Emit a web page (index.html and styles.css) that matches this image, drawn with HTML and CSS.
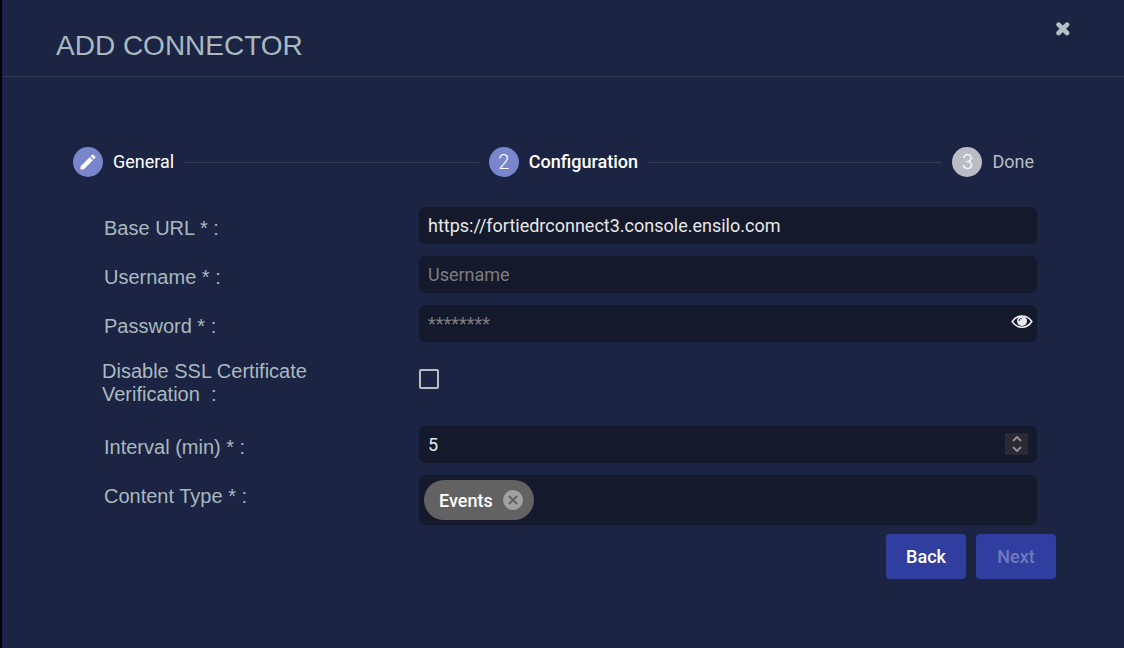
FILE: index.html
```html
<!DOCTYPE html>
<html lang="en">
  <head>
    <meta charset="utf-8">
    <title>Add Connector</title>
    <link rel="stylesheet" href="styles.css">
  </head>

  <body>
    <main class="dialog">
      <header class="dialog-header">
        <h1>ADD CONNECTOR</h1>
        <button type="button" class="close" aria-label="Close">
          <svg width="14" height="14" viewBox="0 0 14 14"><path d="M2.600 2.600 L11 11 M11 2.600 L2.600 11" stroke="currentColor" stroke-width="4.600" stroke-linecap="round"/></svg>
        </button>
      </header>

      <ol class="stepper">
        <li class="step visited">
          <span class="circle">
            <svg width="20" height="20" viewBox="0 0 24 24"><path fill="currentColor" d="M3 17.25V21h3.75L17.81 9.94l-3.75-3.75L3 17.25zM20.71 7.04a1 1 0 0 0 0-1.41l-2.34-2.34a1 1 0 0 0-1.41 0l-1.83 1.83 3.75 3.75 1.83-1.83z"/></svg>
          </span>
          <span>General</span>
        </li>
        <li class="line"></li>
        <li class="step current"><span class="circle">2</span><span>Configuration</span></li>
        <li class="line"></li>
        <li class="step"><span class="circle">3</span><span>Done</span></li>
      </ol>

      <form class="form">
        <div class="row">
          <label for="baseUrl">Base URL * :</label>
          <div class="field"><input type="text" id="baseUrl" value="https://fortiedrconnect3.console.ensilo.com"></div>
        </div>
        <div class="row">
          <label for="username">Username * :</label>
          <div class="field"><input type="text" id="username" placeholder="Username"></div>
        </div>
        <div class="row">
          <label for="password">Password * :</label>
          <div class="field">
            <input type="password" id="password" placeholder="********">
            <button type="button" class="eye" aria-label="Show password">
              <svg width="22" height="16" viewBox="0 0 22 16">
                <path d="M1.2 7.500 C6 0.200 16 0.200 20.800 7.500 C16 15.200 6 15.200 1.200 7.500 Z" fill="none" stroke="currentColor" stroke-width="1.600"/>
                <circle cx="11" cy="7" r="5" fill="currentColor"/>
                <path d="M8 7 Q8 4.600 10.500 4.300" fill="none" stroke="#14192b" stroke-width="1"/>
              </svg>
            </button>
          </div>
        </div>
        <div class="row check-row">
          <label for="disableSsl">Disable SSL Certificate Verification&nbsp; :</label>
          <div class="field"><input type="checkbox" id="disableSsl"></div>
        </div>
        <div class="row">
          <label for="interval">Interval (min) * :</label>
          <div class="field">
            <input type="number" id="interval" value="5">
            <div class="spinner">
              <button type="button" aria-label="Increase"><svg width="10" height="6" viewBox="0 0 10 6"><path d="M1 5 L5 1 L9 5"/></svg></button>
              <button type="button" aria-label="Decrease"><svg width="10" height="6" viewBox="0 0 10 6"><path d="M1 1 L5 5 L9 1"/></svg></button>
            </div>
          </div>
        </div>
        <div class="row">
          <label for="contentType">Content Type * :</label>
          <div class="field chips">
            <span class="chip">Events
              <button type="button" aria-label="Remove Events">
                <svg width="20" height="20" viewBox="0 0 20 20"><circle cx="10" cy="10" r="10" fill="#a1a1a1"/><path d="M6 6 L14 14 M14 6 L6 14" stroke="#626262" stroke-width="1.8"/></svg>
              </button>
            </span>
            <input type="text" id="contentType">
          </div>
        </div>
      </form>

      <div class="actions">
        <button type="button">Back</button>
        <button type="button" disabled>Next</button>
      </div>
    </main>
  </body>
</html>
```

FILE: styles.css
```css
* {
  box-sizing: border-box;
}

body {
  margin: 0;
  background: #020207;
  font-family: Roboto, sans-serif;
  font-size: 18px;
}

button {
  border: none;
  padding: 0;
  background: none;
  font-family: inherit;
  font-size: inherit;
  cursor: pointer;
}

svg {
  display: block;
}

.dialog {
  min-height: 100vh;
  margin-left: 2px;
  border-left: 1px solid #1b1c5c;
  background: #1b2442;
}

/* Title bar */
.dialog-header {
  display: flex;
  justify-content: space-between;
  align-items: flex-start;
  padding: 22px 54px 7px 53px;
  border-bottom: 1px solid #323955;
}

h1 {
  margin: 0;
  padding: 8px 0 7px;
  color: #a9b9c0;
  font: 28px/32px "Liberation Sans", Arial, sans-serif;
}

.close {
  color: #b4c2c6;
}

/* Steps */
.stepper {
  display: flex;
  align-items: center;
  gap: 10px;
  list-style: none;
  margin: 0;
  padding: 70px 90px 30px 70px;
}

.step {
  display: flex;
  align-items: center;
  gap: 10px;
  line-height: 30px;
  color: #b9bcc5;
}

.circle {
  display: flex;
  align-items: center;
  justify-content: center;
  width: 30px;
  height: 30px;
  border-radius: 50%;
  background: #bbbdc6;
  color: #fff;
  font-size: 20px;
  font-weight: 300;
}

.visited,
.current {
  color: #fff;
}

.current {
  font-weight: 500;
}

.visited .circle,
.current .circle {
  background: #7986cb;
}

.line {
  flex: 1;
  height: 1px;
  background: #353c58;
}

/* Form */
.form {
  display: flex;
  flex-direction: column;
  gap: 12px;
  padding: 0 87px 0 99px;
}

.row {
  display: grid;
  grid-template-columns: 317px 1fr;
  align-items: start;
}

.row label {
  padding: 10px 80px 0 2px;
  color: #a9b9c0;
  font: 20px/23px "Liberation Sans", Arial, sans-serif;
}

.field {
  position: relative;
  display: flex;
}

.field input {
  flex: 1;
  min-width: 0;
  height: 37px;
  padding: 0 9px;
  border: none;
  border-radius: 6px;
  background: #14192b;
  color: #e8e8ea;
  font-family: inherit;
  font-size: 18px;
}

.field input::placeholder {
  color: #7d7d80;
}

.eye {
  position: absolute;
  top: 9px;
  right: 4px;
  color: #e9ebf0;
}

.check-row {
  padding: 6px 0 8px;
}

.check-row label {
  padding: 0 80px 0 0;
}

.field input[type="checkbox"] {
  appearance: none;
  flex: none;
  width: 20px;
  height: 20px;
  margin: 9px 0 0;
  padding: 0;
  border: 2px solid #bbbdc6;
  border-radius: 2px;
  background: none;
}

input[type="number"] {
  appearance: textfield;
}

input[type="number"]::-webkit-inner-spin-button {
  appearance: none;
}

.spinner {
  position: absolute;
  top: 7px;
  right: 9px;
  display: flex;
  flex-direction: column;
  justify-content: center;
  align-items: center;
  gap: 4px;
  width: 23px;
  height: 22px;
  background: #2b2a33;
}

.spinner path {
  fill: none;
  stroke: #8f8e97;
  stroke-width: 2;
}

.chips {
  align-items: center;
  padding: 5px;
  border-radius: 6px;
  background: #14192b;
}

.chip {
  display: flex;
  align-items: center;
  gap: 10px;
  height: 40px;
  padding: 0 11px 0 15px;
  border-radius: 20px;
  background: #626262;
  color: #fff;
  font-weight: 500;
}

/* Buttons */
.actions {
  display: flex;
  justify-content: flex-end;
  gap: 10px;
  padding: 9px 68px 0;
}

.actions button {
  width: 80px;
  height: 45px;
  border-radius: 4px;
  background: #303f9f;
  color: #fff;
  font-weight: 500;
}

.actions button:disabled {
  color: #6e79bc;
}
```
